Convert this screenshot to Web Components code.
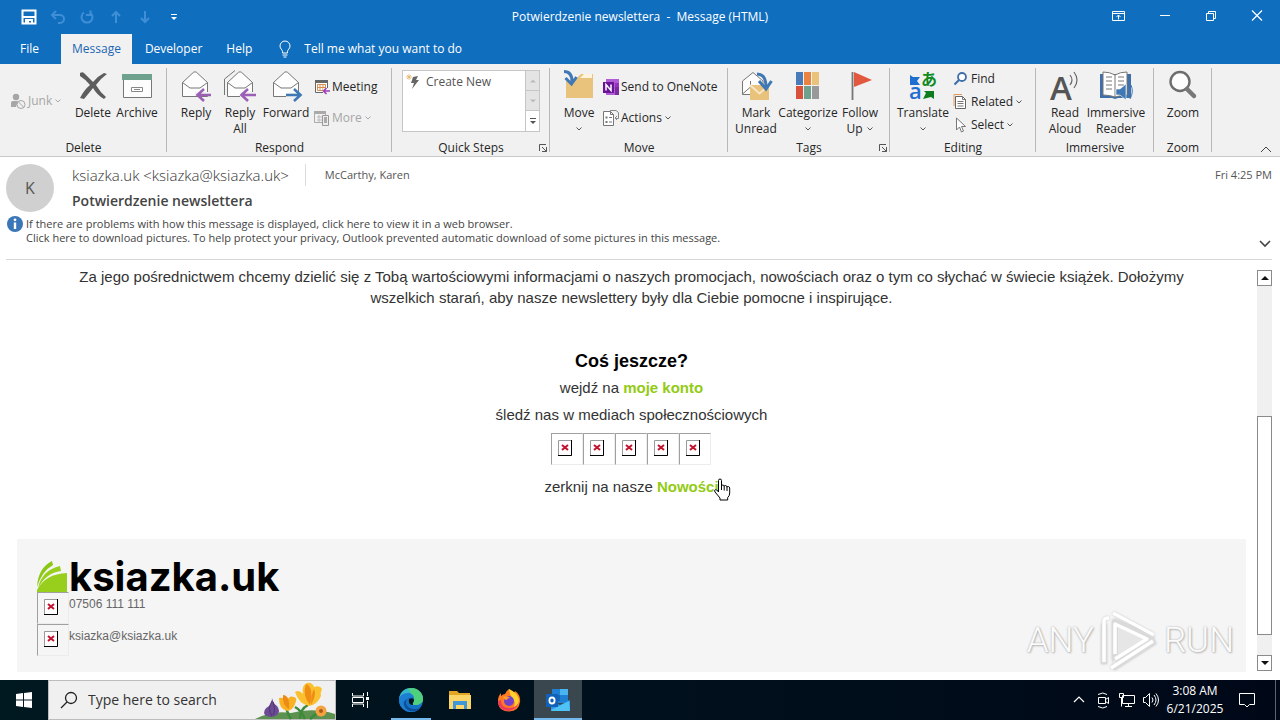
<!DOCTYPE html>
<html lang="en">
<head>
<meta charset="utf-8">
<title>Potwierdzenie newslettera - Message (HTML)</title>
<style>
  html, body { margin: 0; height: 100%; }
  body { font: 12px/16px "Open Sans", "Noto Sans", sans-serif; color: #262626; background: #fff; overflow: hidden; }
</style>
</head>
<body>
<desktop-screen></desktop-screen>
<script>
const BASE = `<style>
  *, *::before { box-sizing: border-box; }
  button { font: inherit; color: inherit; background: none; border: 0; padding: 0; margin: 0; }
  a { color: inherit; text-decoration: none; }
  p, h1, h2 { margin: 0; }
</style>`;

function define(name, markup, setup) {
  const template = document.createElement('template');
  customElements.define(name, class extends HTMLElement {
    constructor() {
      super();
      template.innerHTML ||= BASE + markup;
      this.attachShadow({ mode: 'open' }).append(template.content.cloneNode(true));
    }
    connectedCallback() { if (setup) setup(this, this.shadowRoot); }
  });
}

/* name: [width, height, svg body] */
const ENV = '<path d="M.5 12.500 11.500 2.300q1.500-1 3 0L25.500 12.500v14H.5z" fill="#fdfdfd" stroke="#777"/><path d="m.5 12.500 7.500 5.500h10l7.500-5.500" fill="none" stroke="#777"/>';
const ICONS = {
  save: [16, 16, '<path d="M1.500 1.500h13v13h-13z" fill="none" stroke="#fff" stroke-width="2"/><path d="M1 8h14M5 15v-4h6v4" stroke="#fff" stroke-width="2" fill="none"/><path d="M6 12h2v2H6z" fill="#fff"/>'],
  undo: [16, 16, '<path d="M6 2 2 6l4 4M2.500 6H10a4 4 0 0 1 0 8H8" fill="none" stroke="#3f8fd6" stroke-width="2"/>'],
  redo: [16, 16, '<path d="M5 3.500A5.500 5.500 0 1 0 11 3.500M7 6h4.500V1.500" fill="none" stroke="#3f8fd6" stroke-width="2"/>'],
  up: [16, 16, '<path d="M8 14V3M4 7l4-4 4 4" fill="none" stroke="#3f8fd6" stroke-width="2"/>'],
  down: [16, 16, '<path d="M8 2v11M4 9l4 4 4-4" fill="none" stroke="#3f8fd6" stroke-width="2"/>'],
  custom: [16, 16, '<path d="M5 5.500h6" stroke="#fff"/><path d="M5 8h6l-3 3z" fill="#fff"/>'],
  ribbonopt: [16, 16, '<path d="M1.500 3.500h12v9h-12zM1.500 5.500h12M7.500 11.500V7M5.500 9l2-2 2 2" fill="none" stroke="#fff"/>'],
  min: [16, 16, '<path d="M3 7.500h10" stroke="#fff"/>'],
  restore: [16, 16, '<path d="M3.500 5.500h7v7h-7z" fill="none" stroke="#fff"/><path d="M5.500 5V3.500h7v7H11" fill="none" stroke="#fff"/>'],
  close: [16, 16, '<path d="m3 2.500 10 10m0-10-10 10" stroke="#fff" stroke-width="1.200"/>'],
  bulb: [16, 18, '<path d="M5.500 13v-1.500C5.500 9.500 3 9 3 6a5 5 0 0 1 10 0c0 3-2.500 3.500-2.500 5.500V13zM5.500 15h5M6.500 17h3" fill="none" stroke="#fff"/>'],
  caret: [8, 8, '<path d="m1.500 2.500 2.500 2.500 2.500-2.500" fill="none" stroke="#555"/>'],
  caretgray: [8, 8, '<path d="m1.500 2.500 2.500 2.500 2.500-2.500" fill="none" stroke="#aaa"/>'],
  junk: [16, 16, '<circle cx="6" cy="4" r="3.200" fill="#a6a6a6"/><path d="M1 14V10q0-2 2-2h5l-2 6z" fill="#a6a6a6"/><circle cx="11" cy="11.500" r="4" fill="#f1f1f1" stroke="#a6a6a6"/><path d="m8.500 9 5 5" stroke="#a6a6a6"/>'],
  delete: [32, 32, '<path d="M3 3q3-2 5 1l8 8q5-6 11-9l3 1q-7 5-11 11 4 7 10 12l-2 2q-7-4-11-11-4 5-9 11l-4-1q4-8 10-13Q8 9 3 6z" fill="#5d5d5d"/>'],
  archive: [32, 32, '<path d="M2.500 9h28v18.500h-28z" fill="#fdfdfd" stroke="#777"/><path d="M1 4h30v6H1z" fill="#6fa28e"/><path d="M10.500 17.500h11v4h-11z" fill="#fff" stroke="#888"/><path d="M13 19.500h6" stroke="#888"/>'],
  reply: [32, 32, `<g transform="translate(2 0)">${ENV}</g><path d="M32 22H15v4h17z" fill="#f1f1f1"/><path d="M31 25H18m6-6-6.500 6 6.500 6" fill="none" stroke="#9b5fb5" stroke-width="2.600"/>`],
  replyall: [32, 32, `<path d="M.5 25V9L11 .5" fill="none" stroke="#777"/><g transform="translate(3 0)">${ENV}</g><path d="M32 22H16v5h16z" fill="#f1f1f1"/><path d="M32 25H18m6-6-6.500 6 6.500 6" fill="none" stroke="#9b5fb5" stroke-width="2.600"/>`],
  forward: [32, 32, `<g transform="translate(3 0)">${ENV}</g><path d="M16 23h16v5H16z" fill="#f1f1f1"/><path d="M16 25h14m-6-6 6.500 6-6.500 6" fill="none" stroke="#3f78b5" stroke-width="2.600"/>`],
  meeting: [16, 16, '<path d="M1.500 2.500h12v11h-12z" fill="#fff" stroke="#666"/><path d="M1 1h13v3H1z" fill="#666"/><path d="M3.500 5.500h8v6h-8zM3.500 8.500h8M6 5.500v6M9 5.500v6" fill="none" stroke="#d98a4e"/><path d="M9 9h7v6H9z" fill="#f1f1f1"/><path d="M16 12H9.500m3-3-3 3 3 3" fill="none" stroke="#9b3fb5" stroke-width="1.600"/>'],
  more: [16, 16, '<path d="M.5 1.500h11v11H.5z" fill="none" stroke="#aaa"/><path d="M0 1h12v3H0z" fill="#aaa"/><path d="M3 7h6M3 10h5M5 5v7" stroke="#bbb"/><path d="M8.500 5.500h6v10h-6z" fill="#eee" stroke="#999"/><path d="M10 7h3v6h-3z" fill="#aaa"/>'],
  bolt: [16, 16, '<path d="m7 3 5-1-2 4h3l-7 9 2-6H5z" fill="#666"/><path d="M3 0v6M0 3h6M1 1l4 4m0-4L1 5" stroke="#e3b267" stroke-width=".8"/>'],
  gup: [8, 8, '<path d="M1 5.500h6L4 2.500z" fill="#bbb"/>'],
  gdown: [8, 8, '<path d="M1 2.500h6l-3 3z" fill="#bbb"/>'],
  gmore: [8, 8, '<path d="M1 1.500h6" stroke="#555"/><path d="M1 4h6L4 7z" fill="#555"/>'],
  launch: [10, 10, '<path d="M1.500 8V1.500H8M4 4l4.500 4.500M8.500 4v4.500H4" fill="none" stroke="#555"/>'],
  move: [32, 32, '<path d="M3 28V8h11l4-4h12v24z" fill="#e9c27b"/><path d="m17 8 4-4h8v4z" fill="#fff3db"/><path d="M0 0h13v9l-4 6L0 8z" fill="#f1f1f1"/><path d="M1 1.500c5 0 8 3 8 10M2.500 8 8.500 14l5-7" fill="none" stroke="#3f78b5" stroke-width="3"/>'],
  onenote: [16, 16, '<path d="M3 0h13v16H3z" fill="#b25bd6"/><path d="M12 4h4v4h-4z" fill="#9332bf"/><path d="M12 8h4v8h-4z" fill="#7c2a9f"/><path d="M0 3h11v11H0z" fill="#6a1296"/><path d="M3 11.500v-6l5 6v-6" fill="none" stroke="#fff" stroke-width="1.500"/>'],
  actions: [16, 16, '<path d="M.5 1.500h7l3 3v11H.5z" fill="#fff" stroke="#777"/><path d="M7.500 1.500v3h3" fill="none" stroke="#777"/><path d="M2.500 6.500h2v2h-2zM2.500 11h2v2h-2z" fill="#777"/><path d="M6 7.500h3M6 12h3" stroke="#777"/><path d="M7 .5h6l2.500 2v6h-3M12 8l2-2m-2 2 2 2" fill="none" stroke="#888"/>'],
  unread: [32, 32, '<path d="M2.500 24.500V11L13 2.500 23 11v13.500z" fill="#fdfdfd" stroke="#777"/><path d="m2.500 24 8-7V11" fill="none" stroke="#777"/><path d="M10 15h19v15H10z" fill="#e9c27b"/><path d="m10 15 9.500 8.500L29 15" fill="none" stroke="#f8e7c6" stroke-width="2"/><path d="M17 4c6 0 9 4 9 13m-7-6 7 8 5.500-8" fill="none" stroke="#3f78b5" stroke-width="3"/>'],
  categorize: [32, 32, '<path d="M4 2h7v13H4z" fill="#4a7ab8"/><path d="M12 2h7v13h-7z" fill="#e8843f"/><path d="M20 2h7v13h-7z" fill="#e9c27b"/><path d="M4 16h7v13H4z" fill="#d8513b"/><path d="M12 16h7v13h-7z" fill="#6fa28e"/><path d="M20 16h7v13h-7z" fill="#999"/>'],
  flag: [32, 32, '<path d="M8.500 2v28" stroke="#777" stroke-width="1.800"/><path d="m10 2 18 8-18 7z" fill="#e2593f"/>'],
  translate: [32, 32, '<path d="m3 5 3 2h7l-3 4 3 4H3z" fill="#1f6fd0"/><path d="m27 29-3-2-8 2 3-6-2-2h10z" fill="#0e7c1f"/><text x="2" y="29" font-family="Open Sans, sans-serif" font-size="22" font-weight="600" fill="#1f6fd0">a</text><text x="14" y="15" font-family="Noto Sans CJK JP, sans-serif" font-size="16" font-weight="700" fill="#0e8a1f">あ</text>'],
  find: [16, 16, '<circle cx="9" cy="6" r="4" fill="#fff" stroke="#3f6fa8" stroke-width="1.800"/><path d="m6 9-4.500 4.500" stroke="#3f6fa8" stroke-width="2.200"/>'],
  related: [16, 16, '<path d="M1 12V.5h8" fill="none" stroke="#e39a5e"/><path d="M2.500 2.500h7l3 3v9h-10z" fill="#fff" stroke="#666"/><path d="M9.500 2.500v3h3M4.500 7.500h6M4.500 9.500h6M4.500 12h6" fill="none" stroke="#777"/>'],
  select: [16, 16, '<path d="M3.500 1v12l3-3 2 5 2-1-2-4.500h4z" fill="#fff" stroke="#777"/>'],
  aloud: [32, 32, '<text x="1" y="30" font-family="Open Sans, sans-serif" font-size="33" font-weight="600" fill="#555">A</text><path d="M21 5q4 5 0 10m4-13q6 8 0 16" fill="none" stroke="#666" stroke-width="1.200"/>'],
  reader: [34, 32, '<path d="M1 4h31v24H19l-3 1-3-1H1z" fill="#3f6fa8"/><path d="M4 2q7 0 12 3 5-3 12-3v23q-7 0-12 2-5-2-12-2z" fill="#fff" stroke="#777"/><path d="M16 5v22M7 7h6M7 11h6M7 15h6M7 19h6M19 7h6M19 11h6M19 15h6" stroke="#777"/><path d="M17 19h4l6-5v16l-6-5h-4z" fill="#3f78b5" stroke="#fff" stroke-width=".6"/><path d="M29 17q3 5 0 10m3-12q3 7-1 14" fill="none" stroke="#3f78b5"/>'],
  zoom: [32, 32, '<circle cx="13" cy="11.500" r="9.500" fill="#fdfdfd" stroke="#6d6d6d" stroke-width="2.400"/><path d="m20 19 7 7" stroke="#777" stroke-width="4.500" stroke-linecap="round"/>'],
  collapse: [12, 8, '<path d="m1 6 5-5 5 5" fill="none" stroke="#444"/>'],
  expand: [12, 8, '<path d="m1 1 5 5 5-5" fill="none" stroke="#444" stroke-width="1.600"/>'],
  info: [16, 16, '<circle cx="8" cy="8" r="8" fill="#3a76b8"/><path d="M8 6.500V13" stroke="#fff" stroke-width="2.400"/><circle cx="8" cy="3.800" r="1.400" fill="#fff"/>'],
  sbup: [8, 6, '<path d="M0 5h8L4 1z" fill="#111"/>'],
  sbdown: [8, 6, '<path d="M0 1h8L4 5z" fill="#111"/>'],
  broken: [14, 16, '<path d="M.5.500h13v15H.5z" fill="#fff" stroke="#999"/><path d="M13.500 0v15.500H0" fill="none" stroke="#000"/><path d="m4 5 6 5m0-5-6 5" stroke="#c4122f" stroke-width="2"/>'],
  book: [31, 31, '<path d="M0 26Q1 7 15 0l1 4Q5 10 0 26z" fill="#8cc715"/><path d="M1 27Q5 9 23 5l1 5Q9 12 1 27z" fill="#97cf1c"/><path d="M0 31V29Q8 13 30 12v19z" fill="#97cf1c"/>'],
  hand: [18, 24, '<path d="M5.500 14V2.500q0-1.500 1.500-1.500t1.500 1.500V8q0-1 1.300-1t1.400 1.500q0-1.200 1.400-1t1.400 1.700q.3-1 1.400-.7t1.300 1.500v5q0 3-2 4.500v2.500H7V20l-5-6q-1-1.500.2-2.300 1.200-.7 3.300 2.300z" fill="#fff" stroke="#000"/><path d="M8.500 8v4M11.200 8.500v4M14 9v4" stroke="#000"/>'],
  win: [16, 16, '<path d="m0 2 7-1v6.500H0zM8 1l8-1v7.500H8zM0 8.500h7V15l-7-1zM8 8.500h8V16l-8-1z" fill="#fff"/>'],
  search: [18, 18, '<circle cx="11" cy="7" r="5.500" fill="none" stroke="#222" stroke-width="1.300"/><path d="m7 11-6 6" stroke="#222" stroke-width="1.300"/>'],
  flowers: [80, 38, '<path d="M0 38q18-9 36-6 22-6 44 1v5z" fill="#5c9150"/><path d="M45 38q0-10 8-14M36 38q-5-8-5-14M55 38q8-8 16-9M50 38q-4-9-10-12" fill="none" stroke="#3d8a3a" stroke-width="2.500"/><path d="M17 17q1 5 5 8 4 5 0 9-6 4-12 0-3-5 4-9 3-3 3-8z" fill="#6d4b94"/><path d="M17 20q-5 8 0 15m1-14q3 8 0 13" stroke="#4e3374" fill="none"/><path d="M24 17q5-1 8 3 2-6 7-4 4 1 1 7-2 6-8 7-8-2-8-13z" fill="#f8b224"/><path d="M28 14q7 0 6 14-7-4-6-14z" fill="#ee8b17"/><path d="M40 11q4-3 8 2-2-8 4-11 5-1 7 4 6-2 8 2-2 4-1 7-4 9-12 10-10-2-14-14z" fill="#fbc02d"/><path d="M51 3q8 3 4 21-8-9-4-21zM59 8q3 5-3 16 0-11 3-16z" fill="#ef8d15"/><circle cx="66" cy="30" r="5.500" fill="#f4a340"/><circle cx="66" cy="30" r="2" fill="#a85a1a"/>'],
  taskview: [20, 20, '<path d="M2.500 3v3h11V3M2.500 17v-3h11v3M2.500 7.500h11v5h-11z" fill="none" stroke="#fff"/><path d="M17.500 2v4M17.500 11v7" stroke="#fff"/><path d="M16 7h3v3h-3z" fill="#fff"/>'],
  edge: [26, 26, '<circle cx="13" cy="13" r="12" fill="#1473c4"/><path d="M1 12C2 4 8 1 13 1c8 0 12 6 12 11 0 4-4 6-8 6-2 0-3-1-2-2 3-4 0-8-5-8-4 0-8 2-9 4z" fill="#35b8c9"/><path d="M13 1c8 0 12 6 12 11 0 4-4 6-8 6-2 0-3-1-2-2 3-4 1-8-3-8 2-2 0-5-3-6z" fill="#4fd07c"/><path d="M1 13c0-4 4-7 9-7 3 0 6 2 6 5-4-3-9 1-7 6 1 5 7 7 13 4-3 3-6 4-9 4-7 0-12-6-12-12z" fill="#1d7fd1"/><path d="M9 12c-3 5 2 11 9 10 2 0 4-1 5-2-5 7-15 5-17-2-1-3 1-5 3-6z" fill="#0d4f98"/><path d="M11 12q5-2 5 2-2 2-1 4-5 0-4-6z" fill="#02151f"/>'],
  explorer: [22, 20, '<path d="M0 1h8l2 2h11v16H0z" fill="#e3a524"/><path d="M0 5h22v14H0z" fill="#fcd568"/><path d="M4 11h14v8h-3v-4H7v4H4z" fill="#3f97d8"/>'],
  firefox: [24, 24, '<path d="M12 1q3 2 4 4 2-1 2-2 6 4 5 11-1 9-11 9.500Q1 23 1 13q0-5 3-8v3q2-2 4-2 1-3 4-5z" fill="#ff7a22"/><path d="M12 1q9 4 10 11 0 8-7 9 5-5 1-10-3-3-4-10z" fill="#ffd12e"/><path d="M1 13q0 9 10 10 9-1 11-9-3 6-10 6-8 0-8-8z" fill="#f03a5a"/><circle cx="12" cy="13" r="5" fill="#7442c8"/><path d="M6 9q4-2 7 1-3 0-3 2-3 0-4-3z" fill="#ff9d2b"/>'],
  outlook: [26, 24, '<path d="M7 1h16v14H7z" fill="#1f7fd4"/><path d="M15 1h8v6h-8z" fill="#49b4f0"/><path d="M7 7h8v6H7z" fill="#1466b5"/><path d="M6 13l9 4 10-5v11H6z" fill="#2b9be6"/><path d="M6 22l18-9 1 10H7z" fill="#4fc3f5"/><path d="M1 6h12v13H1z" fill="#0f62b8"/><ellipse cx="7" cy="12.500" rx="2.600" ry="3" fill="none" stroke="#fff" stroke-width="1.800"/>'],
  traychev: [16, 16, '<path d="m3 10 5-5 5 5" fill="none" stroke="#fff" stroke-width="1.200"/>'],
  cam: [16, 18, '<path d="M3.500 6.500h7v6h-7zM10.500 8.500l3-2v6l-3-2M3 3.500q5-3 9 0M3 15.500q5 3 9 0" fill="none" stroke="#fff"/>'],
  net: [18, 16, '<path d="M4.500 3.500h12v8h-12zM10.500 11.500v3M7 14.500h7M1.500 1.500h4v4h-4zM3.500 5.500v9" fill="none" stroke="#fff"/>'],
  sound: [18, 16, '<path d="M1.500 5.500h2l4-4v13l-4-4h-2z" fill="none" stroke="#fff"/><path d="M10 5.500q2 2.500 0 5m2-7.500q4 5 0 10m2-11.500q5 6.500 0 13" fill="none" stroke="#fff"/>'],
  notif: [18, 18, '<path d="M1.500 2.500h15v11h-5l-2.500 2.500-2.500-2.500h-5z" fill="none" stroke="#fff"/>'],
  play: [60, 62, '<g fill="none" stroke-linejoin="round"><path d="M14 52V10l42 17-42 28z" fill="#e6e6e6"/><g stroke="#dadada" stroke-width="6"><path d="M16 50V12l36 16-36 22"/><path d="M5 54V14M14 58l42-27"/></g><g stroke="#fff" stroke-width="3.500"><path d="M16 44V14l32 15-32 20"/><path d="M5 52V11q0-3 5-3M14 3l41 22M12 58l42-27"/></g></g>']
};

customElements.define('ui-icon', class extends HTMLElement {
  static observedAttributes = ['name'];
  constructor() { super(); this.attachShadow({ mode: 'open' }); }
  attributeChangedCallback() {
    const [w, h, body] = ICONS[this.getAttribute('name')];
    this.shadowRoot.innerHTML = `<style>:host{display:block;flex:none;line-height:0}svg{display:block;overflow:visible}</style>
      <svg width="${w}" height="${h}" viewBox="0 0 ${w} ${h}" aria-hidden="true">${body}</svg>`;
  }
});

/* ---------- title bar ---------- */
define('title-bar', `<style>
  :host { display: grid; grid-template-columns: 1fr auto 1fr; height: 34px; background: #106ebe; color: #fff; }
  .qat { display: flex; padding-left: 14px; }
  .qat button { width: 29px; display: grid; place-items: center; }
  h1 { font-size: 12px; font-weight: 400; line-height: 34px; white-space: pre; }
  .ctl { display: flex; justify-content: flex-end; height: 32px; }
  .ctl button { width: 46px; display: grid; place-items: center; }
</style>
<div class="qat">
  <button aria-label="Save"><ui-icon name="save"></ui-icon></button>
  <button aria-label="Undo"><ui-icon name="undo"></ui-icon></button>
  <button aria-label="Redo"><ui-icon name="redo"></ui-icon></button>
  <button aria-label="Previous item"><ui-icon name="up"></ui-icon></button>
  <button aria-label="Next item"><ui-icon name="down"></ui-icon></button>
  <button aria-label="Customize toolbar"><ui-icon name="custom"></ui-icon></button>
</div>
<h1><slot></slot></h1>
<div class="ctl">
  <button aria-label="Ribbon display options"><ui-icon name="ribbonopt"></ui-icon></button>
  <button aria-label="Minimize"><ui-icon name="min"></ui-icon></button>
  <button aria-label="Restore"><ui-icon name="restore"></ui-icon></button>
  <button aria-label="Close"><ui-icon name="close"></ui-icon></button>
</div>`);

/* ---------- tabs ---------- */
define('ribbon-tabs', `<style>
  :host { display: flex; gap: 2px; height: 30px; background: #106ebe; color: #fff; }
  button { padding: 0 11px; }
  .file { width: 59px; }
  .on { background: #f1f1f1; color: #1b66b3; }
  label { display: flex; align-items: center; gap: 11px; padding-left: 12px; }
  input { width: 200px; border: 0; padding: 0; background: none; font: inherit; color: #fff; outline: 0; }
  input::placeholder { color: #fff; opacity: 1; }
</style>
<button class="file">File</button>
<button class="on">Message</button>
<button>Developer</button>
<button>Help</button>
<label><ui-icon name="bulb"></ui-icon><input aria-label="Tell me what you want to do" placeholder="Tell me what you want to do"></label>`);

/* ---------- ribbon parts ---------- */
define('ribbon-group', `<style>
  :host { display: flex; flex-direction: column; position: relative; flex: 0 0 var(--w); min-width: 0; padding: 4px 0 0; box-sizing: border-box; }
  :host::after { content: ""; position: absolute; right: 0; top: 4px; bottom: 4px; width: 1px; background: #b8b8b8; }
  .row { flex: 1; display: flex; padding: 0 var(--pad, 8px); }
  .foot { height: 16px; text-align: center; }
  .launch { position: absolute; right: 2px; bottom: 3px; }
</style>
<div class="row"><slot></slot></div><div class="foot"></div>`, (el, root) => {
  root.querySelector('.foot').textContent = el.getAttribute('label');
  if (el.hasAttribute('launcher')) {
    const b = document.createElement('button');
    b.className = 'launch';
    b.setAttribute('aria-label', el.getAttribute('label') + ' options');
    b.innerHTML = '<ui-icon name="launch"></ui-icon>';
    root.append(b);
  }
});

define('big-button', `<style>
  :host { display: block; flex: 0 0 var(--bw, 44px); min-width: 0; }
  button { width: 100%; display: flex; flex-direction: column; align-items: center; gap: 3px; padding-top: 2px; white-space: nowrap; }
  span { display: flex; flex-direction: column; align-items: center; }
  .last { display: flex; flex-direction: row; align-items: center; gap: 3px; height: 16px; }
</style>
<button></button>`, (el, root) => {
  const [a, b] = el.getAttribute('label').split('|');
  const caret = el.hasAttribute('menu') ? '<ui-icon name="caret"></ui-icon>' : '';
  root.querySelector('button').innerHTML = `<ui-icon name="${el.getAttribute('icon')}"></ui-icon><span>${a}` +
    (b || caret ? `<span class="last">${b || ''}${caret}</span>` : '') + '</span>';
});

define('small-button', `<style>
  :host { display: block; }
  button { display: flex; align-items: center; gap: 2px; height: 16px; white-space: nowrap; }
  :host([disabled]) { color: #a6a6a6; }
</style>
<button></button>`, (el, root) => {
  const off = el.hasAttribute('disabled');
  const b = root.querySelector('button');
  b.disabled = off;
  b.innerHTML = `<ui-icon name="${el.getAttribute('icon')}"></ui-icon>${el.getAttribute('label')}` +
    (el.hasAttribute('menu') ? `<ui-icon name="${off ? 'caretgray' : 'caret'}"></ui-icon>` : '');
});

define('button-stack', `<style>
  :host { display: flex; flex-direction: column; gap: var(--gap, 15px); padding: var(--top, 11px) 0 0 var(--left, 4px); }
</style><slot></slot>`);

define('quick-steps', `<style>
  :host { display: flex; flex: 1; height: 62px; margin-top: 2px; background: #fff; border: 1px solid #c6c6c6; box-sizing: border-box; }
  .list { flex: 1; }
  .list button { display: flex; align-items: center; gap: 4px; padding: 3px 3px; color: #555; }
  .side { width: 14px; display: grid; grid-template-rows: repeat(3, 1fr); border-left: 1px solid #c6c6c6; }
  .side button { display: grid; place-items: center; background: #e4e4e4; border-bottom: 1px solid #c6c6c6; }
  .side button:last-child { background: #fff; border: 0; }
</style>
<div class="list"><button><ui-icon name="bolt"></ui-icon>Create New</button></div>
<div class="side">
  <button aria-label="Previous row"><ui-icon name="gup"></ui-icon></button>
  <button aria-label="Next row"><ui-icon name="gdown"></ui-icon></button>
  <button aria-label="More"><ui-icon name="gmore"></ui-icon></button>
</div>`);

define('ribbon-bar', `<style>
  :host { display: flex; position: relative; height: 93px; background: #f1f1f1; border-bottom: 1px solid #c8c8c8; box-sizing: border-box; }
  .collapse { position: absolute; right: 8px; bottom: 2px; }
</style>
<ribbon-group label="Delete" style="--w:167px">
  <button-stack style="--top:25px;--left:2px"><small-button icon="junk" label="Junk" menu disabled></small-button></button-stack>
  <big-button icon="delete" label="Delete" style="margin-left:auto"></big-button>
  <big-button icon="archive" label="Archive"></big-button>
</ribbon-group>
<ribbon-group label="Respond" style="--w:225px;--pad:7px">
  <big-button icon="reply" label="Reply"></big-button>
  <big-button icon="replyall" label="Reply|All"></big-button>
  <big-button icon="forward" label="Forward" style="--bw:48px"></big-button>
  <button-stack>
    <small-button icon="meeting" label="Meeting"></small-button>
    <small-button icon="more" label="More" menu disabled></small-button>
  </button-stack>
</ribbon-group>
<ribbon-group label="Quick Steps" launcher style="--w:158px;--pad:10px">
  <quick-steps></quick-steps>
</ribbon-group>
<ribbon-group label="Move" style="--w:178px;--pad:7px">
  <big-button icon="move" label="Move" menu></big-button>
  <button-stack style="--left:2px">
    <small-button icon="onenote" label="Send to OneNote"></small-button>
    <small-button icon="actions" label="Actions" menu></small-button>
  </button-stack>
</ribbon-group>
<ribbon-group label="Tags" launcher style="--w:162px;--pad:2px">
  <big-button icon="unread" label="Mark|Unread" style="--bw:52px"></big-button>
  <big-button icon="categorize" label="Categorize" menu style="--bw:52px"></big-button>
  <big-button icon="flag" label="Follow|Up" menu style="--bw:52px"></big-button>
</ribbon-group>
<ribbon-group label="Editing" style="--w:146px;--pad:7px">
  <big-button icon="translate" label="Translate" menu style="--bw:52px"></big-button>
  <button-stack style="--top:3px;--gap:7px">
    <small-button icon="find" label="Find"></small-button>
    <small-button icon="related" label="Related" menu></small-button>
    <small-button icon="select" label="Select" menu></small-button>
  </button-stack>
</ribbon-group>
<ribbon-group label="Immersive" style="--w:118px;--pad:7px">
  <big-button icon="aloud" label="Read|Aloud"></big-button>
  <big-button icon="reader" label="Immersive|Reader" style="--bw:58px"></big-button>
</ribbon-group>
<ribbon-group label="Zoom" style="--w:58px;--pad:7px">
  <big-button icon="zoom" label="Zoom"></big-button>
</ribbon-group>
<button class="collapse" aria-label="Collapse the ribbon"><ui-icon name="collapse"></ui-icon></button>`);

/* ---------- message header ---------- */
define('message-header', `<style>
  :host { display: block; margin: 0 8px 0 6px; padding-top: 7px; height: 103px; border-bottom: 1px solid #d8d8d8; box-sizing: border-box; }
  .top { display: flex; }
  .avatar { width: 48px; height: 48px; border-radius: 50%; background: #d0d0d0; color: #555; font-size: 16px; line-height: 48px; text-align: center; margin-right: 18px; flex: none; }
  .who { flex: 1; }
  .line { display: flex; align-items: center; height: 22px; }
  .from { font-size: 15px; line-height: 22px; font-weight: 300; color: #333; }
  .to { font-size: 11px; margin-left: 16px; padding-left: 19px; border-left: 1px solid #dcdcdc; line-height: 22px; color: #555; }
  .when { margin-left: auto; font-size: 11px; color: #555; }
  h2 { font-size: 14px; line-height: 20px; font-weight: 600; color: #444; margin-top: 5px; }
  .bar { display: flex; align-items: flex-start; gap: 3px; margin: 4px 0 0 1px; font-size: 11px; line-height: 14px; color: #444; }
  .text { display: flex; flex-direction: column; align-items: flex-start; padding-top: 1px; }
  .more { margin: 24px 1px 0 auto; }
</style>
<div class="top">
  <div class="avatar">K</div>
  <div class="who">
    <div class="line"><span class="from">ksiazka.uk &lt;ksiazka@ksiazka.uk&gt;</span><span class="to">McCarthy, Karen</span><span class="when">Fri 4:25 PM</span></div>
    <h2>Potwierdzenie newslettera</h2>
  </div>
</div>
<div class="bar"><ui-icon name="info"></ui-icon>
  <div class="text"><button>If there are problems with how this message is displayed, click here to view it in a web browser.</button><button>Click here to download pictures. To help protect your privacy, Outlook prevented automatic download of some pictures in this message.</button></div>
  <button class="more" aria-label="Expand header"><ui-icon name="expand"></ui-icon></button>
</div>`);

/* ---------- message body ---------- */
define('blocked-image', `<style>
  :host { display: block; flex: none; width: 32px; height: 32px; padding: 6px; border: 1px solid #a0a0a0; border-right-color: #ececec; border-bottom-color: #ececec; box-sizing: border-box; }
</style><ui-icon name="broken"></ui-icon>`);

define('scroll-bar', `<style>
  :host { display: flex; flex-direction: column; width: 15px; margin: 10px 8px 9px 0; background: #f0f0f0; }
  button { height: 16px; display: grid; place-items: center; background: #fff; border: 1px solid #8a8a8a; }
  .track { flex: 1; display: grid; grid-template-rows: 130fr 219fr 20fr; }
  .thumb { grid-row: 2; background: #fff; border: 1px solid #8a8a8a; }
</style>
<button aria-label="Scroll up"><ui-icon name="sbup"></ui-icon></button>
<div class="track"><div class="thumb"></div></div>
<button aria-label="Scroll down"><ui-icon name="sbdown"></ui-icon></button>`);

define('any-run-mark', `<style>
  :host { display: flex; align-items: center; gap: 5px; color: #fbfbfb; font: 300 35px/62px Roboto, sans-serif;
    text-shadow: 0 0 2px #aaa, 1px 1px 2px #bbb; }
  ui-icon { filter: drop-shadow(0 0 1px #c4c4c4); }
</style><span>ANY</span><ui-icon name="play"></ui-icon><span>RUN</span>`);

define('mail-body', `<style>
  :host { display: flex; flex: 1; min-height: 0; position: relative; color: #333; font: 15px/21px "Liberation Sans", Arial, sans-serif; }
  .mail { flex: 1; margin: 0 11px 8px 17px; padding-top: 6px; text-align: center; overflow: hidden; }
  .intro { padding: 0 40px; }
  h2 { margin-top: 40px; font-size: 18px; line-height: 26px; color: #000; }
  .l { line-height: 27px; }
  .l a { position: relative; font-weight: 700; color: #92cb14; }
  .l a ui-icon { position: absolute; right: -12px; top: 0; }
  .social { display: flex; justify-content: center; margin: 5px 1px 8px 0; }
  footer { margin-top: 39px; padding: 22px 20px 16px; background: #f5f5f5; text-align: left; font-size: 12px; line-height: 16px; color: #666; }
  .logo { display: flex; gap: 1px; height: 31px; color: #000; font: 700 40px/31px Inter, sans-serif; }
  .row { display: flex; height: 32px; }
  .row a { padding-top: 4px; }
  any-run-mark { position: absolute; right: 46px; bottom: 8px; }
</style>
<div class="mail">
  <p class="intro">Za jego pośrednictwem chcemy dzielić się z Tobą wartościowymi informacjami o naszych promocjach, nowościach oraz o tym co słychać w świecie książek. Dołożymy wszelkich starań, aby nasze newslettery były dla Ciebie pomocne i inspirujące.</p>
  <h2>Coś jeszcze?</h2>
  <p class="l">wejdź na <a href="#konto">moje konto</a></p>
  <p class="l">śledź nas w mediach społecznościowych</p>
  <div class="social"><blocked-image></blocked-image><blocked-image></blocked-image><blocked-image></blocked-image><blocked-image></blocked-image><blocked-image></blocked-image></div>
  <p class="l">zerknij na nasze <a href="#nowosci">Nowości<ui-icon name="hand"></ui-icon></a></p>
  <footer>
    <div class="logo"><ui-icon name="book"></ui-icon>ksiazka.uk</div>
    <div class="row"><blocked-image></blocked-image><a href="tel:07506111111">07506 111 111</a></div>
    <div class="row"><blocked-image></blocked-image><a href="mailto:ksiazka@ksiazka.uk">ksiazka@ksiazka.uk</a></div>
  </footer>
</div>
<scroll-bar></scroll-bar>
<any-run-mark></any-run-mark>`);

/* ---------- taskbar ---------- */
define('task-bar', `<style>
  :host { display: flex; flex: none; height: 40px; background: linear-gradient(90deg, #001820, #000818); color: #fff; }
  button { display: grid; place-items: center; width: 48px; height: 40px; }
  label { display: flex; align-items: center; gap: 10px; width: 288px; padding-left: 11px; background: #f0f0f0; border: 1px solid #bdbdbd; }
  input { flex: 1; min-width: 0; border: 0; padding: 0; background: none; outline: 0; font: 14px/20px "Open Sans", sans-serif; }
  input::placeholder { color: #333; opacity: 1; }
  .apps { display: flex; gap: 1px; }
  .apps button:first-child { margin-right: 2px; }
  .run { background: linear-gradient(#76b9ed, #76b9ed) bottom / 40px 2px no-repeat; }
  .on { background: linear-gradient(#76b9ed, #76b9ed) bottom / 48px 2px no-repeat, #3a474f; }
  .tray { display: flex; margin-left: auto; }
  .tray .i { width: 24px; }
  .clock { width: 56px; margin-left: 4px; padding-top: 2px; text-align: center; line-height: 18px; white-space: nowrap; display: flex; flex-direction: column; align-items: center; }
  .desk { width: 5px; margin-left: 4px; border-left: 1px solid #5a6470; }
</style>
<button aria-label="Start"><ui-icon name="win"></ui-icon></button>
<label><ui-icon name="search"></ui-icon><input aria-label="Search" placeholder="Type here to search"><ui-icon name="flowers"></ui-icon></label>
<div class="apps">
  <button aria-label="Task view"><ui-icon name="taskview"></ui-icon></button>
  <button class="run" aria-label="Edge"><ui-icon name="edge"></ui-icon></button>
  <button aria-label="File Explorer"><ui-icon name="explorer"></ui-icon></button>
  <button aria-label="Firefox"><ui-icon name="firefox"></ui-icon></button>
  <button class="on" aria-label="Outlook"><ui-icon name="outlook"></ui-icon></button>
</div>
<div class="tray">
  <button class="i" aria-label="Hidden icons"><ui-icon name="traychev"></ui-icon></button>
  <button class="i" aria-label="Meet now"><ui-icon name="cam"></ui-icon></button>
  <button class="i" aria-label="Network"><ui-icon name="net"></ui-icon></button>
  <button class="i" aria-label="Volume"><ui-icon name="sound"></ui-icon></button>
  <div class="clock"><span>3:08 AM</span><span>6/21/2025</span></div>
  <button aria-label="Notifications"><ui-icon name="notif"></ui-icon></button>
  <div class="desk"></div>
</div>`);

define('desktop-screen', `<style>
  :host { display: flex; flex-direction: column; height: 100vh; background: #fff; }
</style>
<title-bar>Potwierdzenie newslettera  -  Message (HTML)</title-bar>
<ribbon-tabs></ribbon-tabs>
<ribbon-bar></ribbon-bar>
<message-header></message-header>
<mail-body></mail-body>
<task-bar></task-bar>`);
</script>
</body>
</html>
